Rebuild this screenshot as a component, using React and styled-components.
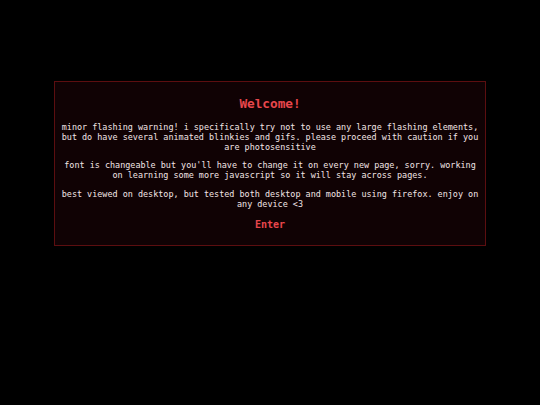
import React from "react";
import styled, { createGlobalStyle } from "styled-components";

const Global = createGlobalStyle`
  html, body { margin: 0; padding: 0; background: #000; }
  body { font-family: "DejaVu Sans Mono", monospace; }
`;

const Page = styled.div`
  width: 540px;
  height: 405px;
  background: #000;
  display: flex;
  justify-content: center;
  align-items: flex-start;
  padding-top: 81px;
  box-sizing: border-box;
`;

const Box = styled.div`
  width: 432px;
  box-sizing: border-box;
  background: #100204;
  border: 1px solid #5c0e10;
  padding: 10px 5px 14px;
  text-align: center;
  color: #f2e4e4;
  font-size: 8.45px;
  line-height: 10px;
`;

const Title = styled.h1`
  margin: 4px 0 10px;
  font-size: 12.7px;
  line-height: 16px;
  font-weight: bold;
  color: #e8474c;
`;

const Para = styled.p`
  margin: 0 0 1em;
`;

const Enter = styled.a`
  display: inline-block;
  margin-top: 2px;
  font-size: 10px;
  line-height: 12px;
  font-weight: bold;
  color: #e8474c;
  text-decoration: none;
  cursor: pointer;
`;

export default function App() {
  return (
    <>
      <Global />
      <Page>
        <Box>
          <Title>Welcome!</Title>
          <Para>
            minor flashing warning! i specifically try not to use any large flashing elements, but do have several animated blinkies and gifs. please proceed with caution if you are photosensitive
          </Para>
          <Para>
            font is changeable but you'll have to change it on every new page, sorry. working on learning some more javascript so it will stay across pages.
          </Para>
          <Para>
            best viewed on desktop, but tested both desktop and mobile using firefox. enjoy on any device &lt;3
          </Para>
          <Enter>Enter</Enter>
        </Box>
      </Page>
    </>
  );
}
